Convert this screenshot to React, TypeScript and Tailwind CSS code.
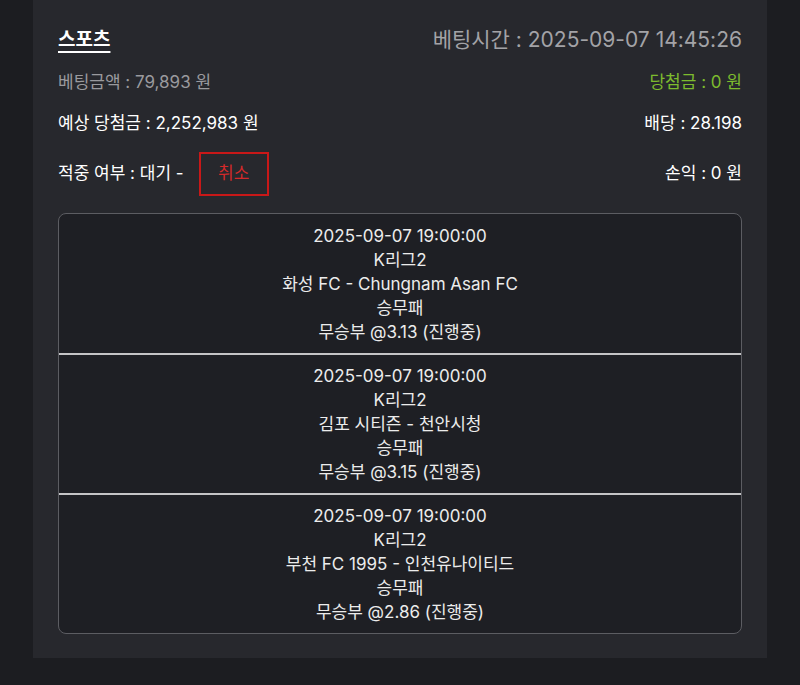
import React from 'react'

interface Pick {
  time:   string
  league: string
  teams:  string
  market: string
  choice: string
}

const PICKS: Pick[] = [
  { time: '2025-09-07 19:00:00', league: 'K리그2', teams: '화성 FC - Chungnam Asan FC', market: '승무패', choice: '무승부 @3.13 (진행중)' },
  { time: '2025-09-07 19:00:00', league: 'K리그2', teams: '김포 시티즌 - 천안시청',       market: '승무패', choice: '무승부 @3.15 (진행중)' },
  { time: '2025-09-07 19:00:00', league: 'K리그2', teams: '부천 FC 1995 - 인천유나이티드', market: '승무패', choice: '무승부 @2.86 (진행중)' },
]

export default function App() {
  return (
    <div
      className="min-h-[685px] w-full bg-[#1c1d21] flex justify-center"
      style={{ fontFamily: 'Inter, "Noto Sans CJK KR", sans-serif' }}
    >
      <div className="w-[734px] bg-[#27282d] px-[25px] pt-[26px] pb-[24px] self-start">
        {/* header */}
        <div className="flex items-center justify-between h-[28px]">
          <span className="text-[19px] font-semibold text-white underline underline-offset-[5px] decoration-2">
            스포츠
          </span>
          <span className="text-[21px] text-[#a3a3a7]">
            베팅시간 : 2025-09-07 14:45:26
          </span>
        </div>

        <div className="mt-[17px] flex items-center justify-between h-[24px] text-[17px]">
          <span className="text-[#9a9a9e]">베팅금액 : 79,893 원</span>
          <span className="text-[#7dbb2e]">당첨금 : 0 원</span>
        </div>

        <div className="mt-[17px] flex items-center justify-between h-[24px] text-[17px] text-white">
          <span>예상 당첨금 : 2,252,983 원</span>
          <span>배당 : 28.198</span>
        </div>

        <div className="mt-[16px] flex items-center justify-between h-[44px] text-[17px] text-white">
          <div className="flex items-center">
            <span>적중 여부 : 대기 -</span>
            <button className="ml-[15px] w-[70px] h-[44px] border-2 border-[#c81818] text-[#d42a2a] text-[17px]">
              취소
            </button>
          </div>
          <span>손익 : 0 원</span>
        </div>

        {/* picks */}
        <div className="mt-[17px] border border-[#5c5d62] rounded-lg bg-[#1e1f24] overflow-hidden">
          {PICKS.map((p, i) => (
            <div
              key={i}
              className={
                'flex flex-col items-center pb-[9px] text-[17px] leading-[24px] text-[#ececec] ' +
                (i > 0 ? 'pt-[9px] border-t-2 border-[#c4c4c6]' : 'pt-[10px]')
              }
            >
              <span>{p.time}</span>
              <span>{p.league}</span>
              <span>{p.teams}</span>
              <span>{p.market}</span>
              <span>{p.choice}</span>
            </div>
          ))}
        </div>
      </div>
    </div>
  )
}
